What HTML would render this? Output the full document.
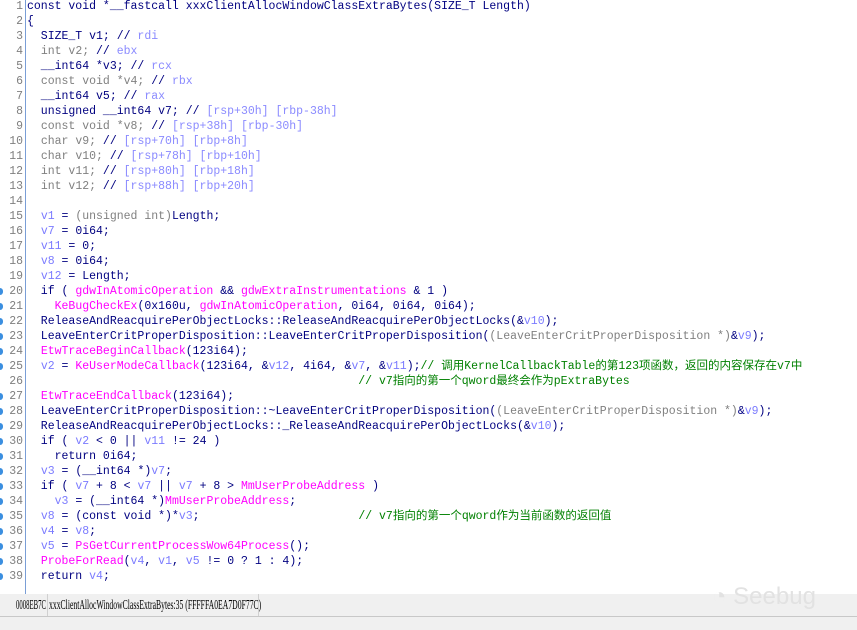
<!DOCTYPE html>
<html><head><meta charset="utf-8"><style>
html,body{margin:0;padding:0;width:857px;height:629px;overflow:hidden;background:#fff;}
#code{position:absolute;left:0;top:0;width:857px;height:594px;overflow:hidden;background:#fff;}
.vl{position:absolute;left:25px;top:0;width:1px;height:594px;background:#7a9ed6;}
pre{margin:0;position:absolute;left:27px;top:-1px;font-family:"Liberation Mono","Noto Sans CJK SC",monospace;font-size:11.5px;line-height:15px;color:#000080;white-space:pre;}
.nums{margin:0;position:absolute;left:0;top:-1px;width:23px;text-align:right;font-family:"Liberation Mono",monospace;font-size:11.5px;line-height:15px;color:#7f7f7f;white-space:pre;}
.g{color:#808080}.v{color:#7b7bff}.f{color:#ff00ff}.c{color:#008000}.r{color:#8a8aff}
.dot{position:absolute;left:-3px;width:6px;height:7px;border-radius:3px;background:#3b8fe0;}
#status{position:absolute;left:0;top:594px;width:857px;height:22px;background:#f0f0f0;font-family:"Liberation Serif","Noto Serif CJK SC",serif;font-size:13.5px;color:#000;}
.st{position:absolute;top:3px;white-space:nowrap;transform-origin:0 0;}
.sep{position:absolute;top:0;width:1px;height:22px;background:#d0d0d0;}
#bottom{position:absolute;left:0;top:616px;width:857px;height:13px;background:#f0f0f0;border-top:1px solid #c8c8c8;}
#wm{position:absolute;left:712px;top:583px;color:#e2e2e2;font-family:"Liberation Sans",sans-serif;font-size:24px;}
</style></head><body>
<div id="code">
<div class="vl"></div>
<pre class="nums">1
2
3
4
5
6
7
8
9
10
11
12
13
14
15
16
17
18
19
20
21
22
23
24
25
26
27
28
29
30
31
32
33
34
35
36
37
38
39</pre>
<pre>const void *__fastcall xxxClientAllocWindowClassExtraBytes(SIZE_T Length)
{
  SIZE_T v1; // <span class="r">rdi</span>
  <span class="g">int v2;</span> // <span class="r">ebx</span>
  __int64 *v3; // <span class="r">rcx</span>
  <span class="g">const void *v4;</span> // <span class="r">rbx</span>
  __int64 v5; // <span class="r">rax</span>
  unsigned __int64 v7; // <span class="r">[rsp+30h] [rbp-38h]</span>
  <span class="g">const void *v8;</span> // <span class="r">[rsp+38h] [rbp-30h]</span>
  <span class="g">char v9;</span> // <span class="r">[rsp+70h] [rbp+8h]</span>
  <span class="g">char v10;</span> // <span class="r">[rsp+78h] [rbp+10h]</span>
  <span class="g">int v11;</span> // <span class="r">[rsp+80h] [rbp+18h]</span>
  <span class="g">int v12;</span> // <span class="r">[rsp+88h] [rbp+20h]</span>

  <span class="v">v1</span> = <span class="g">(unsigned int)</span>Length;
  <span class="v">v7</span> = 0i64;
  <span class="v">v11</span> = 0;
  <span class="v">v8</span> = 0i64;
  <span class="v">v12</span> = Length;
  if ( <span class="f">gdwInAtomicOperation</span> &amp;&amp; <span class="f">gdwExtraInstrumentations</span> &amp; 1 )
    <span class="f">KeBugCheckEx</span>(0x160u, <span class="f">gdwInAtomicOperation</span>, 0i64, 0i64, 0i64);
  ReleaseAndReacquirePerObjectLocks::ReleaseAndReacquirePerObjectLocks(&amp;<span class="v">v10</span>);
  LeaveEnterCritProperDisposition::LeaveEnterCritProperDisposition(<span class="g">(LeaveEnterCritProperDisposition *)</span>&amp;<span class="v">v9</span>);
  <span class="f">EtwTraceBeginCallback</span>(123i64);
  <span class="v">v2</span> = <span class="f">KeUserModeCallback</span>(123i64, &amp;<span class="v">v12</span>, 4i64, &amp;<span class="v">v7</span>, &amp;<span class="v">v11</span>);<span class="c">// 调用KernelCallbackTable的第123项函数，返回的内容保存在v7中</span>
<span class="c">                                                // v7指向的第一个qword最终会作为pExtraBytes</span>
  <span class="f">EtwTraceEndCallback</span>(123i64);
  LeaveEnterCritProperDisposition::~LeaveEnterCritProperDisposition(<span class="g">(LeaveEnterCritProperDisposition *)</span>&amp;<span class="v">v9</span>);
  ReleaseAndReacquirePerObjectLocks::_ReleaseAndReacquirePerObjectLocks(&amp;<span class="v">v10</span>);
  if ( <span class="v">v2</span> &lt; 0 || <span class="v">v11</span> != 24 )
    return 0i64;
  <span class="v">v3</span> = (__int64 *)<span class="v">v7</span>;
  if ( <span class="v">v7</span> + 8 &lt; <span class="v">v7</span> || <span class="v">v7</span> + 8 &gt; <span class="f">MmUserProbeAddress</span> )
    <span class="v">v3</span> = (__int64 *)<span class="f">MmUserProbeAddress</span>;
  <span class="v">v8</span> = (const void *)*<span class="v">v3</span>;                       <span class="c">// v7指向的第一个qword作为当前函数的返回值</span>
  <span class="v">v4</span> = <span class="v">v8</span>;
  <span class="v">v5</span> = <span class="f">PsGetCurrentProcessWow64Process</span>();
  <span class="f">ProbeForRead</span>(<span class="v">v4</span>, <span class="v">v1</span>, <span class="v">v5</span> != 0 ? 1 : 4);
  return <span class="v">v4</span>;</pre>
<div class="dot" style="top:288px"></div><div class="dot" style="top:303px"></div><div class="dot" style="top:318px"></div><div class="dot" style="top:333px"></div><div class="dot" style="top:348px"></div><div class="dot" style="top:363px"></div><div class="dot" style="top:393px"></div><div class="dot" style="top:408px"></div><div class="dot" style="top:423px"></div><div class="dot" style="top:438px"></div><div class="dot" style="top:453px"></div><div class="dot" style="top:468px"></div><div class="dot" style="top:483px"></div><div class="dot" style="top:498px"></div><div class="dot" style="top:513px"></div><div class="dot" style="top:528px"></div><div class="dot" style="top:543px"></div><div class="dot" style="top:558px"></div><div class="dot" style="top:573px"></div>
</div>
<div id="status">
<span class="st" style="left:16px;transform:scaleX(0.5)">0008EB7C</span>
<span class="sep" style="left:47px"></span>
<span class="st" style="left:49px;transform:scaleX(0.57)">xxxClientAllocWindowClassExtraBytes:35 (FFFFFA0EA7D0F77C)</span>
<span class="sep" style="left:258px"></span>
</div>
<div id="bottom"></div>
<div id="wm">◔ Seebug</div>
</body></html>
